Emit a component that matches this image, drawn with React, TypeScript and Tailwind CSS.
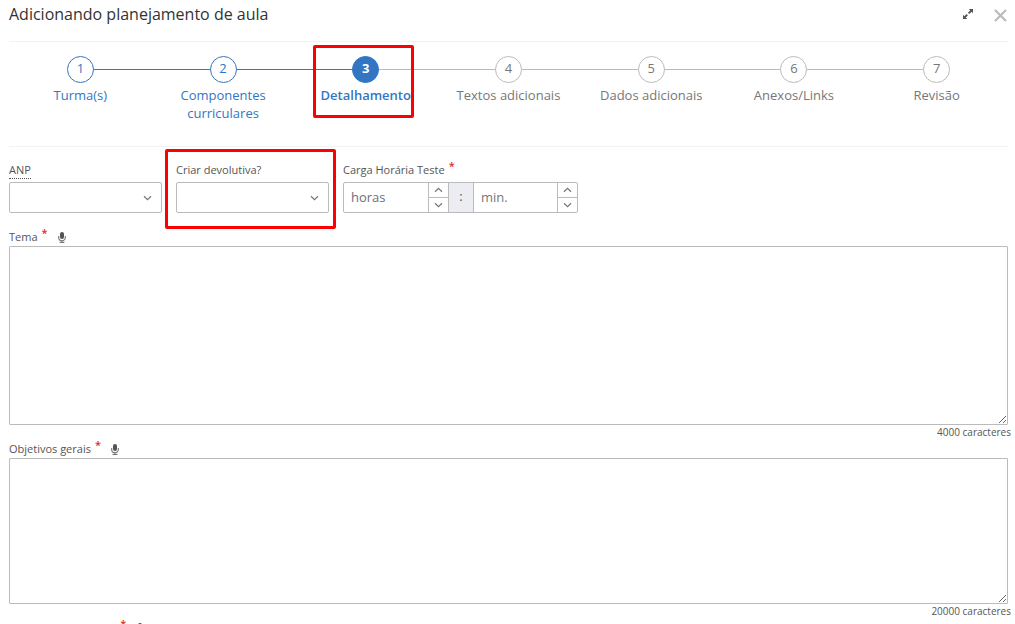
import React from "react";

type StepState = "done" | "current" | "pending";

const steps: { label: string; state: StepState }[] = [
  { label: "Turma(s)", state: "done" },
  { label: "Componentes curriculares", state: "done" },
  { label: "Detalhamento", state: "current" },
  { label: "Textos adicionais", state: "pending" },
  { label: "Dados adicionais", state: "pending" },
  { label: "Anexos/Links", state: "pending" },
  { label: "Revisão", state: "pending" },
];

const circleStyles: Record<StepState, string> = {
  done: "border-[#3276c3] bg-white text-[#3276c3]",
  current: "border-[#3276c3] bg-[#3276c3] font-bold text-white",
  pending: "border-[#bbb] bg-white text-[#777]",
};

const labelStyles: Record<StepState, string> = {
  done: "text-[#3276c3]",
  current: "font-semibold text-[#3276c3]",
  pending: "text-[#777]",
};

function Highlight({ className }: { className: string }) {
  return (
    <span
      aria-hidden="true"
      className={`pointer-events-none absolute z-10 rounded-[2px] border-3 border-[#fe0000] ${className}`}
    />
  );
}

function Chevron({ up = false, className = "" }: { up?: boolean; className?: string }) {
  return (
    <svg viewBox="0 0 9 6" fill="none" stroke="#777" strokeWidth="1.2" className={`h-[6px] w-[9px] ${className}`}>
      <path d={up ? "M1 4.7 4.5 1.3 8 4.7" : "M1 1.3 4.5 4.7 8 1.3"} />
    </svg>
  );
}

function Required() {
  return <span className="relative -top-1 ml-1 text-[11px] font-semibold text-[#e02b27]">*</span>;
}

function MicButton() {
  return (
    <button type="button" aria-label="Ditar texto" className="ml-[10px] flex h-3 w-2 items-center">
      <svg viewBox="0 0 8 11" className="h-[11px] w-2">
        <rect x="2" y="0" width="4" height="7" rx="2" fill="#555" />
        <path d="M.7 4v1.7a3.3 3 0 0 0 6.6 0V4M4 8.6v1.6M1.6 10.4h4.8" fill="none" stroke="#777" strokeWidth="1.1" />
      </svg>
    </button>
  );
}

function Steps() {
  return (
    <nav aria-label="Etapas" className="border-y border-[#f2f2f2] pt-[14px] pb-6">
      <ol className="grid grid-cols-7">
        {steps.map((step, i) => (
          <li key={step.label} className="relative flex flex-col items-center">
            {i > 0 && (
              <span
                className={`absolute top-[13px] right-1/2 h-px w-full ${i < 3 ? "bg-[#3276c3]" : "bg-[#bbb]"}`}
              />
            )}
            <span
              className={`relative z-[1] flex size-[27px] items-center justify-center rounded-full border pb-[2px] text-[13px] leading-none ${circleStyles[step.state]}`}
            >
              {i + 1}
            </span>
            <span
              className={`mt-[3px] w-[110px] text-center text-[13px] leading-[18px] ${step.label.includes("curriculares") ? "px-2" : "whitespace-nowrap"} ${labelStyles[step.state]}`}
            >
              {step.label}
            </span>
            {step.state === "current" && <Highlight className="-top-[11px] left-[19px] h-[73px] w-[101px]" />}
          </li>
        ))}
      </ol>
    </nav>
  );
}

function SelectField({ id, label, dotted = false, marked = false }: { id: string; label: string; dotted?: boolean; marked?: boolean }) {
  return (
    <div className="relative w-[153px]">
      <label htmlFor={id} className="flex h-[18px] items-start text-[11px] leading-4 font-medium">
        <span className={dotted ? "border-b border-dotted border-[#555]" : ""}>{label}</span>
      </label>
      <div className="relative mt-[2px]">
        <select id={id} defaultValue="" className="block h-[31px] w-full appearance-none rounded-[2px] border border-[#bbb] bg-white px-2 text-[13px]">
          <option value=""></option>
        </select>
        <Chevron className="pointer-events-none absolute top-[13px] right-[10px]" />
      </div>
      {marked && <Highlight className="-top-[13px] -left-[11px] h-20 w-[171px]" />}
    </div>
  );
}

function Spinner({ name }: { name: string }) {
  return (
    <div className="flex w-5 flex-col divide-y divide-[#bbb] border-l border-[#bbb]">
      <button type="button" aria-label={`Aumentar ${name}`} className="flex flex-1 items-center justify-center">
        <Chevron up />
      </button>
      <button type="button" aria-label={`Diminuir ${name}`} className="flex flex-1 items-center justify-center">
        <Chevron />
      </button>
    </div>
  );
}

function DurationField() {
  return (
    <div>
      <label htmlFor="horas" className="flex h-[18px] items-start text-[11px] leading-4 font-medium">
        Carga Horária Teste
        <Required />
      </label>
      <div className="mt-[2px] flex h-[31px] w-[235px] rounded-[2px] border border-[#bbb] text-[13px]">
        <input id="horas" placeholder="horas" className="w-[84px] pr-1 pl-[7px] placeholder:text-[#6b7080]" />
        <Spinner name="horas" />
        <span className="flex w-[26px] items-center justify-center border-x border-[#bbb] bg-[#ebedf2] pb-[2px]">:</span>
        <input aria-label="Minutos" placeholder="min." className="w-0 flex-1 px-[7px] placeholder:text-[#777]" />
        <Spinner name="minutos" />
      </div>
    </div>
  );
}

function TextField({ id, label, limit, height }: { id: string; label: string; limit?: number; height: string }) {
  return (
    <div>
      <div className="flex h-[18px] items-center text-[11px] leading-4 font-medium">
        <label htmlFor={id} className="flex items-center">
          {label}
          <Required />
        </label>
        <MicButton />
      </div>
      <textarea id={id} className={`block w-full rounded-[1px] border border-[#bbb] p-2 text-[13px] ${height}`} />
      {limit && <p className="-mr-[3px] h-[15px] text-right text-[10px] leading-[15px]">{limit} caracteres</p>}
    </div>
  );
}

export default function App() {
  return (
    <main className="h-screen overflow-hidden bg-white pr-[7px] pl-[9px] font-['Open_Sans','Noto_Sans',sans-serif] text-[#555]">
      <header className="flex h-[41px] items-start justify-between">
        <h1 className="mt-[2px] text-base leading-6 text-[#333]">Adicionando planejamento de aula</h1>
        <div className="mt-2 flex items-start gap-[19px]">
          <button type="button" aria-label="Expandir" className="flex h-3 w-3 items-center justify-center">
            <svg viewBox="0 0 10 10" className="size-[10px]">
              <path d="M5.8 0H10v4.2L8.6 2.8 6.3 5.1 4.9 3.7 7.2 1.4zM4.2 10H0V5.8l1.4 1.4 2.1-2.1 1.4 1.4-2.1 2.1z" fill="#555" />
            </svg>
          </button>
          <button type="button" aria-label="Fechar" className="flex size-[15px] items-center justify-center">
            <svg viewBox="0 0 13 13" className="size-[13px]">
              <path d="M1 1l11 11M12 1 1 12" stroke="#bbb" strokeWidth="2.2" />
            </svg>
          </button>
        </div>
      </header>
      <Steps />
      <form className="pt-[15px]">
        <div className="flex gap-[14px]">
          <SelectField id="anp" label="ANP" dotted />
          <SelectField id="devolutiva" label="Criar devolutiva?" marked />
          <DurationField />
        </div>
        <div className="mt-[15px]">
          <TextField id="tema" label="Tema" limit={4000} height="h-[179px]" />
          <TextField id="objetivos-gerais" label="Objetivos gerais" limit={20000} height="h-[146px]" />
          <TextField id="objetivos-especificos" label="Objetivos específicos" height="h-[146px]" />
        </div>
      </form>
    </main>
  );
}
